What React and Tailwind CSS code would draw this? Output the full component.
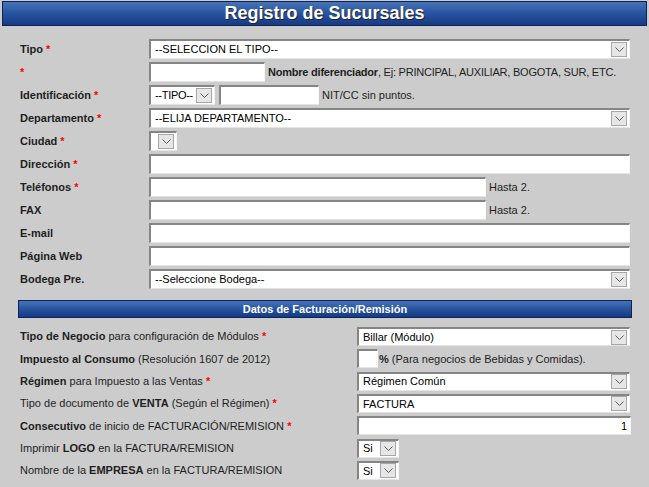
import React from "react";

const font = { fontFamily: '"Liberation Sans", Arial, Helvetica, sans-serif' };

function Req() {
  return <span className="font-bold text-[#ff0000]"> *</span>;
}

function Chevron() {
  return (
    <span className="mr-[2px] flex h-[15px] w-[16px] shrink-0 items-center justify-center border border-[#a6a6a6] bg-[#e6e6e6]">
      <svg width="9" height="5" viewBox="0 0 9 5">
        <path d="M0.5 0.5 L4.5 4.5 L8.5 0.5" stroke="#5a5a5a" strokeWidth="1" fill="none" />
      </svg>
    </span>
  );
}

function Frame({ className = "", children }) {
  return (
    <div
      className={`flex shrink-0 items-center border-t-2 border-l-2 border-r border-b border-t-[#858585] border-l-[#858585] border-r-[#f6f6f6] border-b-[#e4e4e4] bg-white ${className}`}
    >
      {children}
    </div>
  );
}

function Select({ className = "", text = "", textClass = "" }) {
  return (
    <Frame className={className}>
      <span className={`flex-1 overflow-hidden whitespace-nowrap pl-[4px] text-black ${textClass}`}>{text}</span>
      <Chevron />
    </Frame>
  );
}

function Input({ className = "", value = "" }) {
  return (
    <Frame className={className}>
      <span className="flex-1 pr-[3px] text-right text-black">{value}</span>
    </Frame>
  );
}

function Row({ label, children }) {
  return (
    <div className="flex h-[20px] items-center">
      <div className="w-[129px] shrink-0 whitespace-nowrap font-bold">{label}</div>
      <div className="flex h-full items-center">{children}</div>
    </div>
  );
}

function Row2({ label, children }) {
  return (
    <div className="flex h-[19px] items-center">
      <div className="w-[337px] shrink-0 whitespace-nowrap">{label}</div>
      <div className="flex h-full items-center">{children}</div>
    </div>
  );
}

export default function App() {
  return (
    <div style={font} className="h-[487px] w-[649px] overflow-hidden bg-[#cccccc] text-[11px] text-[#1e1e1e]">
      <div className="mx-[2px] mt-[1px] flex h-[25px] items-center justify-center border border-[#0c2358] bg-gradient-to-b from-[#4774b5] via-[#2753a0] to-[#173a82] text-[18px] font-bold text-white [text-shadow:1px_1px_0_#2a2018]">
        Registro de Sucursales
      </div>

      <div className="mt-[13px] flex flex-col gap-[3px] pl-[20px]">
        <Row label={<>Tipo<Req /></>}>
          <Select className="h-[20px] w-[481px]" text="--SELECCION EL TIPO--" />
        </Row>
        <Row label={<Req />}>
          <Input className="h-[20px] w-[116px]" />
          <span className="ml-[3px] whitespace-nowrap tracking-[-0.22px]">
            <b>Nombre diferenciador</b>, Ej: PRINCIPAL, AUXILIAR, BOGOTA, SUR, ETC.
          </span>
        </Row>
        <Row label={<>Identificación<Req /></>}>
          <Select className="h-[20px] w-[66px]" text="--TIPO--" textClass="tracking-[-0.3px] pl-[3px]" />
          <Input className="ml-[4px] h-[20px] w-[100px]" />
          <span className="ml-[3px] whitespace-nowrap">NIT/CC sin puntos.</span>
        </Row>
        <Row label={<>Departamento<Req /></>}>
          <Select className="h-[20px] w-[481px]" text="--ELIJA DEPARTAMENTO--" />
        </Row>
        <Row label={<>Ciudad<Req /></>}>
          <Select className="h-[20px] w-[28px]" text="" />
        </Row>
        <Row label={<>Dirección<Req /></>}>
          <Input className="h-[20px] w-[481px]" />
        </Row>
        <Row label={<>Teléfonos<Req /></>}>
          <Input className="h-[20px] w-[337px]" />
          <span className="ml-[3px] whitespace-nowrap">Hasta 2.</span>
        </Row>
        <Row label="FAX">
          <Input className="h-[20px] w-[337px]" />
          <span className="ml-[3px] whitespace-nowrap">Hasta 2.</span>
        </Row>
        <Row label="E-mail">
          <Input className="h-[20px] w-[481px]" />
        </Row>
        <Row label="Página Web">
          <Input className="h-[20px] w-[481px]" />
        </Row>
        <Row label="Bodega Pre.">
          <Select className="h-[20px] w-[481px]" text="--Seleccione Bodega--" />
        </Row>
      </div>

      <div className="mx-[18px] mt-[11px] flex h-[18px] w-[614px] items-center justify-center border border-[#0c2358] bg-gradient-to-b from-[#4774b5] via-[#2753a0] to-[#173a82] font-bold text-white">
        Datos de Facturación/Remisión
      </div>

      <div className="mt-[9px] flex flex-col gap-[3.33px] pl-[20px]">
        <Row2 label={<><b>Tipo de Negocio</b> para configuración de Módulos<Req /></>}>
          <Select className="h-[19px] w-[273px]" text="Billar (Módulo)" />
        </Row2>
        <Row2 label={<><b>Impuesto al Consumo</b> (Resolución 1607 de 2012)</>}>
          <Input className="h-[19px] w-[21px]" />
          <span className="ml-[1px] whitespace-nowrap">
            <b>%</b> (Para negocios de Bebidas y Comidas).
          </span>
        </Row2>
        <Row2 label={<><b>Régimen</b> para Impuesto a las Ventas<Req /></>}>
          <Select className="h-[19px] w-[273px]" text="Régimen Común" />
        </Row2>
        <Row2 label={<>Tipo de documento de <b>VENTA</b> (Según el Régimen)<Req /></>}>
          <Select className="h-[19px] w-[273px]" text="FACTURA" />
        </Row2>
        <Row2 label={<><b>Consecutivo</b> de inicio de FACTURACIÓN/REMISION<Req /></>}>
          <Input className="h-[19px] w-[274px]" value="1" />
        </Row2>
        <Row2 label={<>Imprimir <b>LOGO</b> en la FACTURA/REMISION</>}>
          <Select className="h-[19px] w-[42px]" text="Si" />
        </Row2>
        <Row2 label={<>Nombre de la <b>EMPRESA</b> en la FACTURA/REMISION</>}>
          <Select className="h-[19px] w-[42px]" text="Si" />
        </Row2>
      </div>
    </div>
  );
}
